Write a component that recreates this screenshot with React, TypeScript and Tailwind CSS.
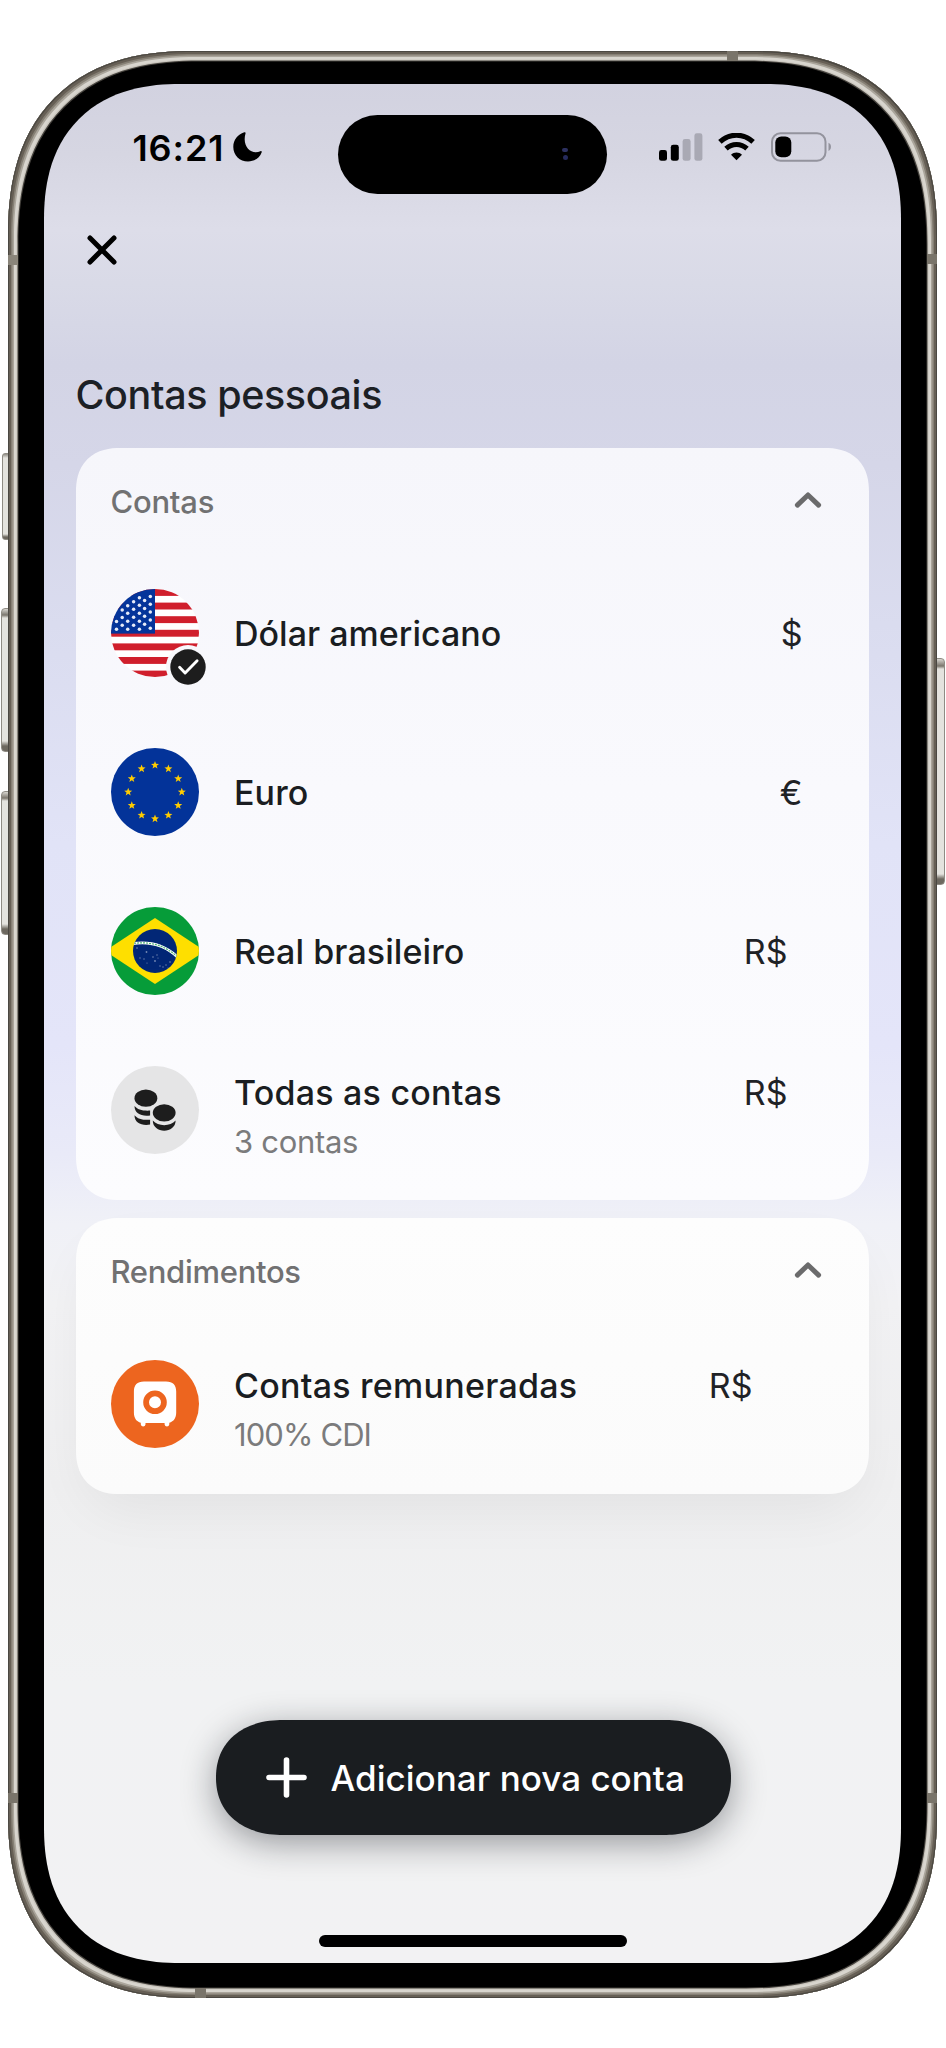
import type { ReactNode } from "react";

const EU_STARS = Array.from({ length: 12 }, (_, i) => {
  const a = (i * Math.PI) / 6;
  return { x: 44 + 26.8 * Math.sin(a), y: 44 - 26.8 * Math.cos(a) };
});

function starPoints(cx: number, cy: number, r: number) {
  return Array.from({ length: 10 }, (_, i) => {
    const a = (i * Math.PI) / 5;
    const d = i % 2 === 0 ? r : r * 0.42;
    return `${(cx + d * Math.sin(a)).toFixed(2)},${(cy - d * Math.cos(a)).toFixed(2)}`;
  }).join(" ");
}

const US_STARS: [number, number][] = [
  [39.3, 7.5], [39.3, 15.2], [39.3, 23], [39.3, 31], [39.3, 39.2],
  [33.6, 11.5], [33.6, 19.5], [33.6, 27.2], [33.6, 35.2],
  [28.4, 8.7], [28.4, 16.2], [28.4, 24.2], [28.4, 32.3], [28.4, 40.2],
  [22.6, 12.7], [22.6, 20.3], [22.6, 28.3], [22.6, 36.2],
  [16.7, 16.7], [16.7, 24.2], [16.7, 32.3], [16.7, 40.2],
  [11.2, 21], [11.2, 28.5], [11.2, 36.3],
  [5.5, 32.5], [5.5, 40.2],
];

function UsFlag() {
  return (
    <div className="relative size-[88px] shrink-0">
      <svg viewBox="0 0 88 88" className="size-full">
        <defs>
          <clipPath id="us-clip">
            <circle cx="44" cy="44" r="44" />
          </clipPath>
        </defs>
        <g clipPath="url(#us-clip)">
          <rect width="88" height="88" fill="#fff" />
          {[0, 1, 2, 3, 4, 5, 6].map((i) => (
            <rect key={i} y={i * 13.6} width="88" height="6.9" fill="#d01f2c" />
          ))}
          <rect width="44" height="44.6" fill="#04349a" />
          {US_STARS.map(([x, y]) => (
            <circle key={`${x}-${y}`} cx={x} cy={y} r="1.75" fill="#e6ebf7" />
          ))}
        </g>
      </svg>
      <svg viewBox="0 0 44 44" className="absolute top-[55.5px] left-[55px] size-[44px]">
        <circle cx="22" cy="22" r="22" fill="#f8f8fc" />
        <circle cx="22" cy="22" r="17.7" fill="#1d1d1d" />
        <path d="M13.6 22.3l5.5 5.6 12-12.2" fill="none" stroke="#fff" strokeWidth="2.9" strokeLinecap="round" strokeLinejoin="round" />
      </svg>
    </div>
  );
}

function EuFlag() {
  return (
    <svg viewBox="0 0 88 88" className="size-[88px] shrink-0">
      <circle cx="44" cy="44" r="44" fill="#033399" />
      {EU_STARS.map((s, i) => (
        <polygon key={i} points={starPoints(s.x, s.y, 4.2)} fill="#ffcc00" />
      ))}
    </svg>
  );
}

function BrFlag() {
  return (
    <svg viewBox="0 0 88 88" className="size-[88px] shrink-0">
      <defs>
        <clipPath id="br-clip">
          <circle cx="44" cy="44" r="44" />
        </clipPath>
        <clipPath id="br-globe">
          <circle cx="44" cy="44" r="22" />
        </clipPath>
      </defs>
      <g clipPath="url(#br-clip)">
        <rect width="88" height="88" fill="#069c39" />
        <path d="M44 11L94 44 44 77-6 44z" fill="#fedf00" />
        <circle cx="44" cy="44" r="22" fill="#022776" />
        <g clipPath="url(#br-globe)">
          <path d="M20 36.8C38 33.8 54 37.8 67 50.500" fill="none" stroke="#fff" strokeWidth="2.800" />
          <path d="M20 36.8C38 33.8 54 37.8 67 50.500" fill="none" stroke="#4fb277" strokeWidth="1.2" strokeDasharray="2 1" />
        </g>
        <g fill="#fff" opacity=".45">
          <circle cx="26" cy="41" r=".8" />
          <circle cx="35.500" cy="45" r=".9" />
          <circle cx="29" cy="51" r=".7" />
          <circle cx="33" cy="52" r=".7" />
          <circle cx="36" cy="56" r=".6" />
          <circle cx="42" cy="50" r=".8" />
          <circle cx="46" cy="48" r=".7" />
          <circle cx="44" cy="54" r=".9" />
          <circle cx="47" cy="51" r=".6" />
          <circle cx="49" cy="59" r=".7" />
          <circle cx="52" cy="60" r=".7" />
          <circle cx="55" cy="58" r=".7" />
          <circle cx="59" cy="55" r=".8" />
          <circle cx="57" cy="61" r=".6" />
        </g>
      </g>
    </svg>
  );
}

function CoinsIcon() {
  return (
    <svg viewBox="0 0 88 88" className="size-[88px] shrink-0">
      <circle cx="44" cy="44" r="44" fill="#e5e5e6" />
      <g fill="#1d1d1d">
        <ellipse cx="34.900" cy="32.200" rx="11.400" ry="8.600" />
        <path d="M23.500 40c3 3.600 8 5 15.600 4.600v4.800c-8.600 1.200-15.600-1.800-15.600-9.400z" />
        <path d="M23.500 49.200c3 3.600 8 5 15.600 4.600v4.800c-8.600 1.400-15.600-1.800-15.600-9.400z" />
        <ellipse cx="53.200" cy="46.800" rx="11.400" ry="8.600" />
        <path d="M41.800 54.600c5.200 6.200 17.600 6.200 22.800 0 .2 13.400-23 13.400-22.800 0z" />
      </g>
    </svg>
  );
}

function SafeIcon() {
  return (
    <svg viewBox="0 0 88 88" className="size-[88px] shrink-0">
      <circle cx="44" cy="44" r="44" fill="#ed651f" />
      <path
        d="M33 21.500h22c7 0 10.200 3.400 10.200 10v21c0 5.500-2.500 9-6.900 10.200v1.900a2.400 2.400 0 0 1-4.700 0v-1.500H34.500v1.500a2.400 2.400 0 0 1-4.700 0v-1.900c-4.500-1.200-6.900-4.700-6.900-10.200v-21c0-6.600 3.200-10 10.100-10z"
        fill="#fff"
      />
      <circle cx="44" cy="42.300" r="8.900" fill="#fff" stroke="#ed651f" strokeWidth="5.800" />
    </svg>
  );
}

function Chevron() {
  return (
    <svg viewBox="0 0 28 18" className="h-[18px] w-[28px]">
      <path d="M3.400 14.100L14 4l10.600 10.100" fill="none" stroke="#6b6b6c" strokeWidth="5" strokeLinecap="round" strokeLinejoin="round" />
    </svg>
  );
}

function StatusBar() {
  return (
    <div className="flex h-[79px] items-start pl-[89px]">
      <div className="flex h-[64px] w-[205px] items-center">
        <span className="w-[100px] pt-[1px] text-[36px] leading-none font-semibold tracking-[0.9px] text-black">16:21</span>
        <svg viewBox="0 0 29 30" className="h-[30px] w-[29px]">
          <path d="M11.300.3C4.700 2.500.3 8 .3 14.900.3 23.300 6.800 29.500 15 29.500c6.300 0 11.700-3.500 13.700-9.300.3-1-.5-1.500-1.300-1-8.700 4.200-18.700-4.200-14.900-17.600C12.900.5 12.300 0 11.300.3z" fill="#000" />
        </svg>
      </div>
      <div className="flex h-[78.500px] w-[269.500px] shrink-0 items-center justify-end rounded-full bg-black pr-[39px]">
        <div className="flex flex-col items-center gap-[3px]">
          <i className="h-[4px] w-[6px] rounded-full bg-[#2c3060]" />
          <i className="size-[5px] rounded-full bg-[#252a5c]" />
        </div>
      </div>
      <div className="flex h-[64px] items-center pl-[52px]">
        <svg viewBox="0 0 44 28" className="h-[28px] w-[44px]">
          <rect x="0" y="17" width="8" height="10.800" rx="2.400" fill="#000" />
          <rect x="11.800" y="11.800" width="8" height="16" rx="2.400" fill="#000" />
          <rect x="23.600" y="6" width="8" height="21.800" rx="2.400" fill="#a9a9b4" />
          <rect x="35.400" y=".3" width="8" height="27.500" rx="2.400" fill="#a9a9b4" />
        </svg>
        <svg viewBox="0 0 37 28" className="ml-[15px] h-[28px] w-[37px]">
          <path d="M1.900 8.900C11.300-.1 25.700-.1 35.100 8.900" fill="none" stroke="#000" strokeWidth="5" />
          <path d="M8 15.600c6-5.600 15-5.600 21 0" fill="none" stroke="#000" strokeWidth="5" />
          <path d="M18.500 27.300l-5.500-5.500c3-3.100 8-3.100 11 0z" fill="#000" />
        </svg>
        <svg viewBox="0 0 62 30" className="ml-[16px] h-[30px] w-[62px]">
          <rect x="1" y="1.200" width="53.500" height="27.600" rx="8.500" fill="none" stroke="#93939d" strokeWidth="2" />
          <rect x="4.300" y="4.500" width="16" height="20.800" rx="6" fill="#000" />
          <path d="M57.500 10.800c3.300 1.200 3.300 7 0 8.200z" fill="#93939d" />
        </svg>
      </div>
    </div>
  );
}

type RowProps = {
  icon: ReactNode;
  title: string;
  subtitle?: string;
  amount: string;
  tracking: string;
  subTracking?: string;
  amountPad: string;
};

function AccountRow({ icon, title, subtitle, amount, tracking, subTracking = "", amountPad }: RowProps) {
  return (
    <li className={`flex h-[88px] ${subtitle ? "items-start" : "items-center"}`}>
      {icon}
      <div className={`flex grow pl-[35.500px] ${subtitle ? "pt-[1.500px]" : ""}`}>
        <div className="grow whitespace-nowrap">
          <p className={`text-[34px] leading-[49px] font-medium text-[#1a1d21] ${tracking}`}>{title}</p>
          {subtitle && <p className={`text-[31px] leading-[49px] text-[#7b7b7c] ${subTracking}`}>{subtitle}</p>}
        </div>
        <span className={`text-[34px] leading-[49px] text-[#1f2226] ${amountPad}`}>{amount}</span>
      </div>
    </li>
  );
}

function SectionHeader({ label, tracking }: { label: string; tracking: string }) {
  return (
    <header className="flex h-[104px] items-center justify-between pr-[12.500px]">
      <h2 className={`pt-[2px] text-[31px] leading-none font-medium text-[#717172] ${tracking}`}>{label}</h2>
      <Chevron />
    </header>
  );
}

export default function App() {
  return (
    <main className="relative h-[2048px] w-[946px] overflow-hidden bg-white px-[7.5px] pt-[50.5px] font-['Inter',sans-serif]">
      <i className="absolute top-[453px] left-[2px] h-[87px] w-[8px] rounded-l-[3px] border border-[#8f8c84] bg-[linear-gradient(#8f8c84,#e4e3de_4px,#e4e3de_80px,#6d685f_83px)]" />
      <i className="absolute top-[608px] left-[1px] h-[144px] w-[9px] rounded-l-[4px] border border-[#8f8c84] bg-[linear-gradient(#d8d6d0,#7b766d_6px,#e4e3de_9px,#e4e3de_132px,#6d685f_137px)]" />
      <i className="absolute top-[791px] left-[1px] h-[144px] w-[9px] rounded-l-[4px] border border-[#8f8c84] bg-[linear-gradient(#d8d6d0,#7b766d_6px,#e4e3de_9px,#e4e3de_132px,#6d685f_137px)]" />
      <i className="absolute top-[658px] left-[935px] h-[227px] w-[10px] rounded-r-[4px] border border-[#8f8c84] bg-[linear-gradient(#d8d6d0,#7b766d_7px,#e4e3de_10px,#e4e3de_215px,#6d685f_220px)]" />

      <div className="relative h-[1947px] w-[929.5px] rounded-[159px] bg-black p-[10px] shadow-[inset_0_0_0_1px_#4b4842,inset_0_0_0_3px_#665f55,inset_0_0_0_4.500px_#857f74,inset_0_0_0_6px_#aaa59b,inset_0_0_0_8.500px_#d8d5ce,inset_0_0_0_9.500px_#c9c5bd,inset_0_0_0_10.500px_#45423d] [corner-shape:superellipse(1.25)] supports-[corner-shape:squircle]:rounded-[185px]">
        <i className="absolute top-0 left-[719px] h-[10px] w-[11px] bg-[#79746a]" />
        <i className="absolute top-[204px] left-0 h-[10px] w-[10px] bg-[#8a857a]" />
        <i className="absolute top-[203px] right-0 h-[10px] w-[10px] bg-[#79746a]" />
        <i className="absolute bottom-[195px] left-0 h-[10px] w-[10px] bg-[#79746a]" />
        <i className="absolute right-0 bottom-[195px] h-[10px] w-[10px] bg-[#79746a]" />
        <i className="absolute bottom-0 left-[187px] h-[10px] w-[11px] bg-[#79746a]" />

        <div className="h-full px-[26px] pt-[23.500px] pb-[25px]">
          <div className="flex h-full flex-col rounded-[119px] bg-[linear-gradient(180deg,#d2d2e0_0px,#d6d6e2_70px,#dddde9_145px,#d9dae7_200px,#d3d4e5_280px,#d5d6e8_380px,#dadcef_540px,#e1e3f7_760px,#e4e5f9_960px,#e9eaf8_1070px,#f0f1f7_1140px,#f2f2f4_1220px,#efeff0_1400px,#f1f2f3_1600px,#f2f2f3_100%)] px-[32px] pt-[31px] [corner-shape:superellipse(1.22)] supports-[corner-shape:squircle]:rounded-[136px]">
            <div className="-mx-[32px]">
              <StatusBar />
            </div>
            <div className="flex h-[111px] items-center pl-[11px]">
              <svg viewBox="0 0 30 30" className="size-[30px]">
                <path d="M3 3l24 24M27 3L3 27" stroke="#000" strokeWidth="5" strokeLinecap="round" />
              </svg>
            </div>
            <h1 className="mt-[65px] text-[39.500px] leading-[50px] font-medium tracking-[-0.400px] text-[#1c2025]">Contas pessoais</h1>

            <section className="mt-[28px] h-[752px] w-[793.5px] rounded-[38px] bg-[linear-gradient(180deg,#f6f6fb,#f9f9fd_45%,#fcfcfe)] pr-[35px] pl-[35px] [corner-shape:superellipse(1.22)] supports-[corner-shape:squircle]:rounded-[44px]">
              <SectionHeader label="Contas" tracking="tracking-[-0.250px]" />
              <ul className="mt-[37px] flex flex-col gap-[71px]">
                <AccountRow icon={<UsFlag />} title="Dólar americano" amount="$" tracking="tracking-[0.020px]" amountPad="pr-[31.500px]" />
                <AccountRow icon={<EuFlag />} title="Euro" amount="€" tracking="tracking-[0.100px]" amountPad="pr-[31.500px]" />
                <AccountRow icon={<BrFlag />} title="Real brasileiro" amount="R$" tracking="tracking-[0.080px]" amountPad="pr-[46.500px]" />
                <AccountRow icon={<CoinsIcon />} title="Todas as contas" subtitle="3 contas" amount="R$" tracking="tracking-[0.220px]" subTracking="tracking-[-0.300px]" amountPad="pr-[46.500px]" />
              </ul>
            </section>

            <section className="mt-[18px] h-[275.500px] w-[793.5px] rounded-[38px] bg-[linear-gradient(180deg,#fdfdfd,#fbfbfb)] pr-[35px] pl-[35px] shadow-[0_24px_56px_-10px_rgba(0,0,0,0.06)] [corner-shape:superellipse(1.22)] supports-[corner-shape:squircle]:rounded-[44px]">
              <SectionHeader label="Rendimentos" tracking="tracking-[-0.300px]" />
              <ul className="mt-[37.500px]">
                <AccountRow icon={<SafeIcon />} title="Contas remuneradas" subtitle="100% CDI" amount="R$" tracking="tracking-[0.250px]" subTracking="tracking-[-0.900px]" amountPad="pr-[81.500px]" />
              </ul>
            </section>

            <button className="mt-[226.500px] ml-[140px] flex h-[115px] w-[515px] shrink-0 items-center rounded-[57.500px] bg-[#1a1d20] pl-[50px] shadow-[0_8px_34px_rgba(20,24,32,0.42)] [corner-shape:superellipse(1.15)] supports-[corner-shape:squircle]:[border-radius:67px/57.500px]">
              <svg viewBox="0 0 41 41" className="size-[41px]">
                <path d="M20.500 3v35M3 20.500h35" stroke="#fff" strokeWidth="5.600" strokeLinecap="round" />
              </svg>
              <span className="pt-[2px] pl-[24px] text-[35px] leading-none font-medium tracking-[0.020px] whitespace-nowrap text-white">Adicionar nova conta</span>
            </button>
            <i className="mt-[100px] ml-[243.500px] h-[12px] w-[308px] shrink-0 rounded-full bg-black" />
          </div>
        </div>
      </div>
    </main>
  );
}
